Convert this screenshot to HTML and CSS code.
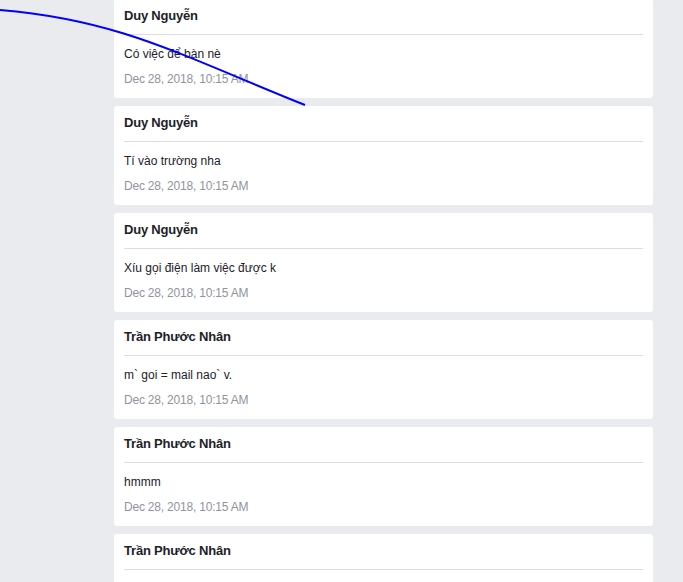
FILE: index.html
```html
<!DOCTYPE html>
<html lang="vi">
<head>
<meta charset="utf-8">
<title>Messages</title>
<link rel="stylesheet" href="styles.css">
</head>
<body>
<main class="feed">
  <article class="card">
    <header class="card-head"><h3 class="author">Duy Nguyễn</h3></header>
    <p class="msg">Có việc để bàn nè</p>
    <time class="date">Dec 28, 2018, 10:15 AM</time>
  </article>
  <article class="card">
    <header class="card-head"><h3 class="author">Duy Nguyễn</h3></header>
    <p class="msg">Tí vào trường nha</p>
    <time class="date">Dec 28, 2018, 10:15 AM</time>
  </article>
  <article class="card">
    <header class="card-head"><h3 class="author">Duy Nguyễn</h3></header>
    <p class="msg">Xíu gọi điện làm việc được k</p>
    <time class="date">Dec 28, 2018, 10:15 AM</time>
  </article>
  <article class="card">
    <header class="card-head"><h3 class="author">Trần Phước Nhân</h3></header>
    <p class="msg">m` goi = mail nao` v.</p>
    <time class="date">Dec 28, 2018, 10:15 AM</time>
  </article>
  <article class="card">
    <header class="card-head"><h3 class="author">Trần Phước Nhân</h3></header>
    <p class="msg">hmmm</p>
    <time class="date">Dec 28, 2018, 10:15 AM</time>
  </article>
  <article class="card">
    <header class="card-head"><h3 class="author">Trần Phước Nhân</h3></header>
  </article>
</main>
<svg class="stroke" width="683" height="582" viewBox="0 0 683 582" aria-hidden="true">
  <path d="M0,10 C120,20 180,55 305,105" fill="none" stroke="#0000ff" stroke-width="2"/>
</svg>
</body>
</html>
```

FILE: styles.css
```css
html, body {
  margin: 0;
  padding: 0;
  height: 100%;
  overflow: hidden;
  background: #e9ebee;
  font-family: "Liberation Sans", Arial, sans-serif;
}

.feed {
  display: flex;
  flex-direction: column;
  gap: 8px;
  width: 539px;
  margin: -1px 0 0 114px;
}

.card {
  display: flex;
  flex-direction: column;
  flex-shrink: 0;
  height: 99px;
  box-sizing: border-box;
  padding: 9px 10px 11px;
  background: #fff;
  border-radius: 3px;
}

.card-head {
  padding-bottom: 10px;
  border-bottom: 1px solid #dadde1;
}

.author {
  margin: 0;
  font-size: 13px;
  line-height: 16px;
  font-weight: bold;
  letter-spacing: -0.2px;
  color: #1d2129;
}

.msg {
  margin: 11px 0 0;
  font-size: 12px;
  line-height: 16px;
  color: #1d2129;
}

.date {
  margin-top: 9px;
  font-size: 12px;
  line-height: 16px;
  letter-spacing: -0.2px;
  color: #90949c;
}

.stroke {
  position: absolute;
  top: 0;
  left: 0;
  pointer-events: none;
}
```
